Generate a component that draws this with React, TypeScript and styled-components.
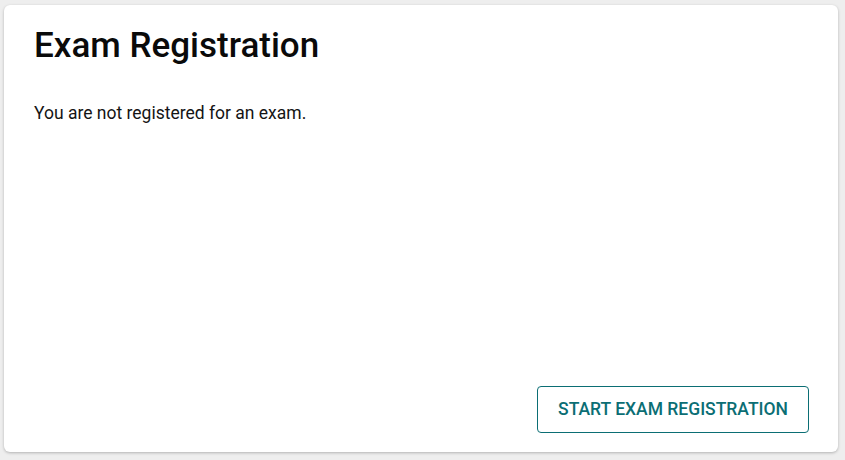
import styled, { createGlobalStyle } from 'styled-components'

const Reset = createGlobalStyle`
  html, body { margin: 0; padding: 0; background: #eeeeee; }
  body { font-family: Roboto, 'Liberation Sans', sans-serif; }
`

const Page = styled.div`
  height: 460px;
  box-sizing: border-box;
  padding: 5px 7px 8px 4px;
  display: flex;
`

const Card = styled.div`
  flex: 1;
  background: #fff;
  border-radius: 6px;
  box-shadow: 0 1px 3px rgba(0, 0, 0, 0.25);
  padding: 21px 29px 19px 30px;
  display: flex;
  flex-direction: column;
`

const Title = styled.h1`
  margin: 0;
  font-size: 35px;
  font-weight: 500;
  color: #0a0a0a;
  line-height: 40px;
`

const Message = styled.p`
  margin: 35px 0 0;
  font-size: 17.5px;
  color: #141414;
  line-height: 24px;
`

const Actions = styled.div`
  margin-top: auto;
  display: flex;
  justify-content: flex-end;
`

const OutlineBtn = styled.button`
  height: 47px;
  padding: 0 20px 1px;
  background: #fff;
  border: 1px solid #0b6e74;
  border-radius: 4px;
  color: #0b6e74;
  font-family: Roboto, 'Liberation Sans', sans-serif;
  font-size: 17.5px;
  font-weight: 500;
  cursor: pointer;
`

export default function App() {
  return (
    <>
      <Reset />
      <Page>
        <Card>
          <Title>Exam Registration</Title>
          <Message>You are not registered for an exam.</Message>
          <Actions>
            <OutlineBtn type="button">START EXAM REGISTRATION</OutlineBtn>
          </Actions>
        </Card>
      </Page>
    </>
  )
}
